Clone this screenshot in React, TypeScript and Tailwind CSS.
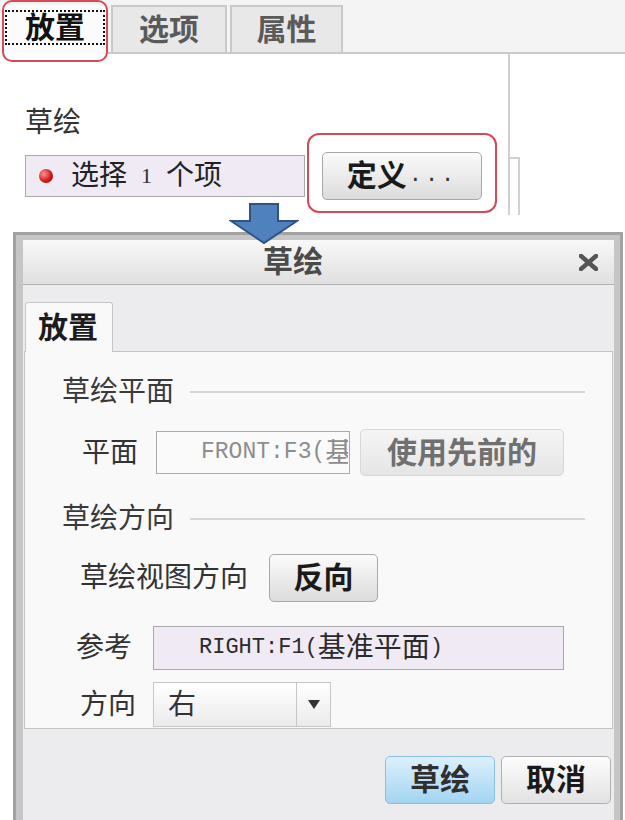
import React from 'react'

const cjk = "font-['Liberation_Sans','Noto_Sans_CJK_SC',sans-serif]"
const mono = "font-['Liberation_Mono','Noto_Sans_CJK_SC',monospace]"

function SectionHead({ title }: { title: string }) {
  return (
    <div className="h-[36px] flex items-center pl-[37px] pr-[27px]">
      <span className="text-[28px] leading-none text-[#3a3a3a]">{title}</span>
      <div className="flex-1 ml-[16px] h-[2px] bg-[#d6d6d6]" />
    </div>
  )
}

function CloseIcon() {
  return (
    <svg width="19" height="17" viewBox="0 0 19 17">
      <path d="M2 2 L17 15 M17 2 L2 15" stroke="#555" strokeWidth="4.5" strokeLinecap="square" />
    </svg>
  )
}

export default function App() {
  return (
    <div className={`relative w-[625px] h-[820px] overflow-hidden bg-white ${cjk}`}>
      {/* 上方：属性面板 */}
      <div className="h-[215px] flex flex-col">
        <div className="h-[54px] bg-[#f4f4f4] flex items-end pl-[3px]">
          <div className="w-[104px] h-[49px] bg-[#fbfbfb] pt-[5px] px-[2px]">
            <div className="h-[35px] border-2 border-dotted border-[#111] flex items-center justify-center text-[30px] font-bold leading-none text-[#111]">放置</div>
          </div>
          <div className="w-[4px] border-b-2 border-[#c9c9c9]" />
          <div className="w-[116px] h-[49px] border-2 border-[#c9c9c9] bg-[#e8e8e8] flex items-center justify-center text-[30px] font-bold leading-none text-[#5a5a5a]">选项</div>
          <div className="w-[3px] border-b-2 border-[#c9c9c9]" />
          <div className="w-[113px] h-[49px] border-2 border-[#c9c9c9] bg-[#e8e8e8] flex items-center justify-center text-[30px] font-bold leading-none text-[#5a5a5a]">属性</div>
          <div className="flex-1 border-b-2 border-[#c9c9c9]" />
        </div>

        <div className="flex-1 flex">
          <div className="w-[510px] border-r-2 border-[#d0d0d0] pl-[25px] pt-[51px]">
            <div className="h-[36px] flex items-center text-[28px] leading-none text-[#333]">草绘</div>
            <div className="mt-[11px] h-[48px] flex items-center">
              <div className="w-[280px] h-[42px] border border-[#a9a9a9] bg-[#efeaf3] flex items-center pl-[13px] whitespace-nowrap">
                <div className="w-[14px] h-[14px] rounded-full bg-[radial-gradient(circle_at_35%_35%,#ff9a9a,#d81818_55%,#8a0000)]" />
                <span className="ml-[18px] text-[28px] leading-none text-[#222]">选择</span>
                <span className="mx-[14px] text-[22px] leading-none text-[#333] font-['Liberation_Serif',serif]">1</span>
                <span className="text-[28px] leading-none text-[#222]">个项</span>
              </div>
              <div className="ml-[17px] w-[160px] h-[48px] rounded-[5px] border border-[#a7a7a7] bg-gradient-to-b from-[#fbfbfb] to-[#dcdcdc] flex items-center justify-center">
                <span className="text-[30px] font-bold leading-none text-[#1a1a1a]">定义</span>
                <span className={`ml-[2px] text-[22px] leading-none tracking-[3px] text-[#333] ${mono}`}>...</span>
              </div>
            </div>
          </div>
          <div className="mt-[103px] w-[10px] h-[58px] border-t-2 border-r-2 border-[#d0d0d0]" />
        </div>
      </div>

      {/* 标注 */}
      <div className="absolute left-[2px] top-0 w-[106px] h-[62px] rounded-[10px] border-2 border-[#d94855]" />
      <div className="absolute left-[307px] top-[133px] w-[190px] h-[80px] rounded-[12px] border-2 border-[#d94855]" />
      <svg className="absolute left-[229px] top-[203px] z-10" width="70" height="42" viewBox="0 0 70 42">
        <path d="M21 1 H49 V18 H68 L35 40 L2 18 H21 Z" fill="#4f81bd" stroke="#2f5384" strokeWidth="2" strokeLinejoin="miter" />
      </svg>

      <div className="h-[17px]" />

      {/* 草绘对话框 */}
      <div className="ml-[13px] w-[610px] h-[620px] border-[3px] border-[#a2a2a2] bg-[#c6c6c6] pl-[7px] pr-[6px] pt-[5px]">
        <div className="h-full bg-[#ececef] flex flex-col">
          <div className="h-[45px] shrink-0 bg-gradient-to-b from-[#f8f8f8] to-[#e0e0e0] border-b border-[#b3b3b3] flex items-center">
            <span className="ml-[240px] text-[30px] font-bold leading-none text-[#4a4a4a]">草绘</span>
            <div className="flex-1" />
            <div className="mr-[16px] flex items-center"><CloseIcon /></div>
          </div>

          <div className="pt-[17px] pl-[2px] flex">
            <div className="relative z-10 -mb-px w-[88px] h-[50px] border border-b-0 border-[#c6c6c6] bg-[#f9f9f9] rounded-t-[3px] flex items-center pl-[12px] text-[30px] font-bold leading-none text-[#1c1c1c]">放置</div>
          </div>

          <div className="mx-[1px] border border-[#c4c4c4] bg-[#f9f9f9] pt-[22px] pb-[1px]">
            <SectionHead title="草绘平面" />

            <div className="mt-[19px] h-[47px] flex items-center pl-[57px]">
              <span className="text-[28px] leading-none text-[#333]">平面</span>
              <div className="ml-[18px] w-[194px] h-[43px] border border-[#ababab] bg-[#fafafa] flex items-center pl-[44px]">
                <div className="w-[147px] overflow-hidden whitespace-nowrap flex items-center">
                  <span className={`text-[23px] leading-none text-[#8d8d8d] ${mono}`}>FRONT:F3(</span>
                  <span className="text-[28px] leading-none text-[#8d8d8d]">基</span>
                </div>
              </div>
              <div className="ml-[10px] w-[204px] h-[47px] rounded-[5px] border border-[#d8d8d8] bg-gradient-to-b from-[#f5f5f5] to-[#e5e5e5] flex items-center justify-center text-[30px] font-bold leading-none text-[#707070]">使用先前的</div>
            </div>

            <div className="mt-[25px]"><SectionHead title="草绘方向" /></div>

            <div className="mt-[17px] h-[48px] flex items-center pl-[55px]">
              <span className="text-[28px] leading-none text-[#333]">草绘视图方向</span>
              <div className="ml-[21px] w-[109px] h-[48px] rounded-[5px] border border-[#a9a9a9] bg-gradient-to-b from-[#fbfbfb] to-[#dcdcdc] flex items-center justify-center text-[30px] font-bold leading-none text-[#1a1a1a]">反向</div>
            </div>

            <div className="mt-[24px] h-[44px] flex items-center pl-[51px]">
              <span className="text-[28px] leading-none text-[#333]">参考</span>
              <div className="ml-[21px] w-[411px] h-[44px] border border-[#a9a9a9] bg-[#efeaf3] flex items-center pl-[45px] whitespace-nowrap">
                <span className={`text-[22px] leading-none text-[#2a2a2a] ${mono}`}>RIGHT:F1(</span>
                <span className="text-[28px] leading-none text-[#2a2a2a]">基准平面</span>
                <span className={`text-[22px] leading-none text-[#2a2a2a] ${mono}`}>)</span>
              </div>
            </div>

            <div className="mt-[12px] h-[45px] flex items-center pl-[55px]">
              <span className="text-[28px] leading-none text-[#333]">方向</span>
              <div className="ml-[17px] w-[178px] h-[45px] border border-[#c6c6c6] bg-gradient-to-b from-[#ffffff] to-[#ebebeb] flex">
                <div className="flex-1 flex items-center pl-[14px] text-[28px] leading-none text-[#333]">右</div>
                <div className="w-[34px] border-l border-[#c6c6c6] flex items-center justify-center">
                  <svg width="12" height="9" viewBox="0 0 12 9"><path d="M0 0 H12 L6 9 Z" fill="#333" /></svg>
                </div>
              </div>
            </div>
          </div>

          <div className="flex justify-end gap-[6px] pt-[27px] pr-[3px]">
            <div className="w-[110px] h-[48px] rounded-[5px] border border-[#8cc0e2] bg-gradient-to-b from-[#dcf0fc] to-[#a3d4f2] flex items-center justify-center text-[30px] font-bold leading-none text-[#2f2f2f]">草绘</div>
            <div className="w-[110px] h-[48px] rounded-[5px] border border-[#b0b0b0] bg-gradient-to-b from-[#fdfdfd] to-[#e2e2e2] flex items-center justify-center text-[30px] font-bold leading-none text-[#1a1a1a]">取消</div>
          </div>
        </div>
      </div>
    </div>
  )
}
